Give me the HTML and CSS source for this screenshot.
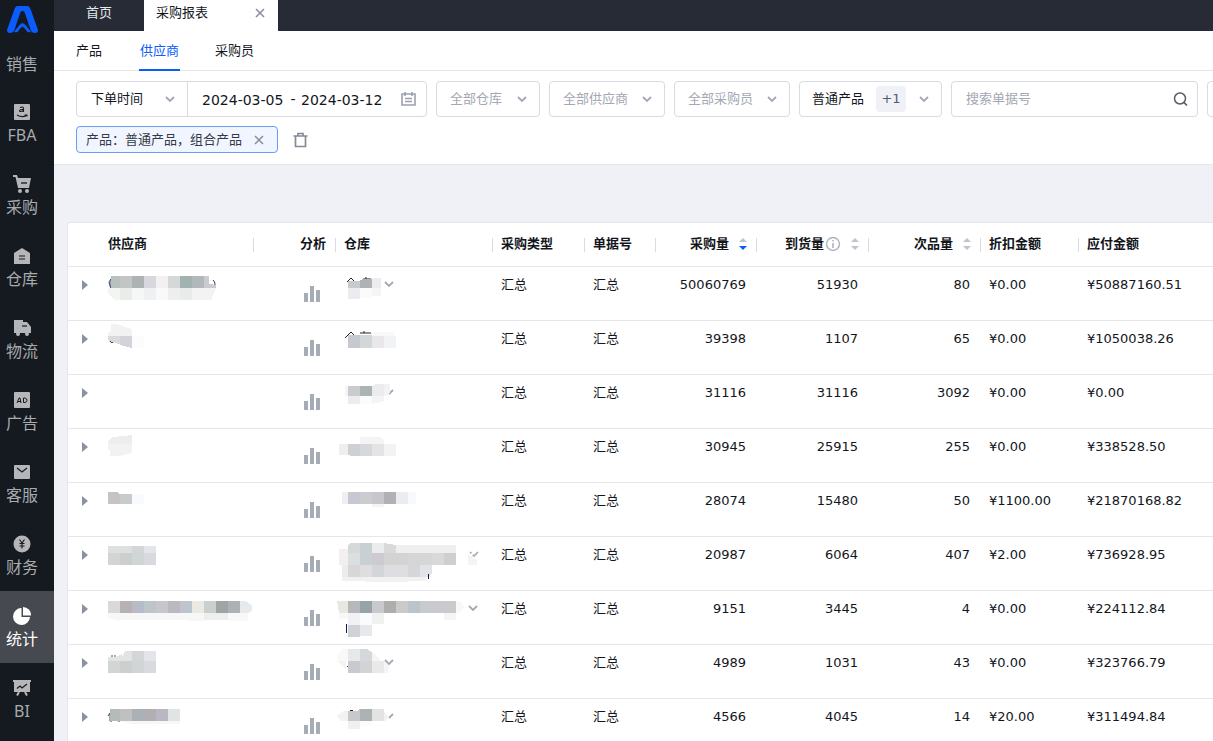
FILE: index.html
```html
<!DOCTYPE html>
<html lang="zh-CN">
<head>
<meta charset="utf-8">
<title>采购报表</title>
<link rel="stylesheet" href="styles.css">
</head>
<body>
<svg class="sprite" aria-hidden="true">
  <symbol id="chev" viewBox="0 0 10 7"><path d="M1 1l4 4 4-4" fill="none" stroke="#a3a9b5" stroke-width="1.8"/></symbol>
  <symbol id="cross" viewBox="0 0 10 10"><path d="M1 1l8 8M9 1l-8 8" fill="none" stroke="currentColor" stroke-width="1.6"/></symbol>
  <symbol id="bars" viewBox="0 0 16 16"><path d="M0 7h4v9H0zM6 0h4v16H6zM12 4h4v12h-4z" fill="#a6acb6"/></symbol>
  <symbol id="tri" viewBox="0 0 6 10"><path d="M0 0l6 5-6 5z" fill="#8b929f"/></symbol>
</svg>
<div class="app">
  <nav class="side">
    <a class="logo" href="#" aria-label="主页"><svg width="31" height="27" viewBox="0 0 31 27"><path d="M10.500 0h10q2 0 3 3l7.500 21q0 3-3 3-3 0-4-2L17.500 6q-2-2-4 0L7 25q-1 2-4 2-3 0-3-3L7.500 3q1-3 3-3z" fill="#0a5cff"/><path d="M6 26.500L13 18q2.500-2.500 5 0l7 8.500h-4.500L17 22q-1.500-1.500-3 0l-3.500 4.500z" fill="#0a5cff" stroke="#141a20" stroke-width=".7"/></svg></a>
    <a class="item first" href="#">销售</a>
    <a class="item" href="#"><svg width="18" height="18" viewBox="0 0 18 18"><rect x="1" y="1" width="16" height="16" rx="1" fill="#b4b6b9"/><path d="M7 4.500q3.500-1.500 3.500 1v3.500M10.500 6.500q-4-.3-4 1.300t4-.3M4 12q5 3 9.500.500M11.500 12h2.500v1.500" fill="none" stroke="#141a20" stroke-width="1.1"/></svg>FBA</a>
    <a class="item" href="#"><svg width="18" height="18" viewBox="0 0 18 18"><path d="M0 0h4l1 3h13l-2 10H5L2.500 2H0z" fill="#b4b6b9"/><circle cx="7" cy="16" r="2" fill="#b4b6b9"/><circle cx="14" cy="16" r="2" fill="#b4b6b9"/><path d="M8 8h6" stroke="#141a20" stroke-width="1.300"/></svg>采购</a>
    <a class="item" href="#"><svg width="18" height="18" viewBox="0 0 18 18"><path d="M1 6l8-5 8 5v11H1z" fill="#b4b6b9"/><path d="M6 9h6M6 12h6" stroke="#141a20" stroke-width="1.200"/></svg>仓库</a>
    <a class="item" href="#"><svg width="18" height="18" viewBox="0 0 18 18"><path d="M1 1h9v2h4l4 5v6H1z" fill="#b4b6b9"/><circle cx="5" cy="15" r="2" fill="#b4b6b9"/><circle cx="14" cy="15" r="2" fill="#b4b6b9"/><path d="M9 7h5" stroke="#141a20" stroke-width="1.200"/></svg>物流</a>
    <a class="item" href="#"><svg width="18" height="18" viewBox="0 0 18 18"><rect x="1" y="1" width="16" height="16" rx="1" fill="#b4b6b9"/><path d="M4 12l2-5h1l1 5M5 10.500h3M10.500 7v4.500h1.500q2-.5 2-2.200T12 7z" fill="none" stroke="#141a20" stroke-width="1"/></svg>广告</a>
    <a class="item" href="#"><svg width="18" height="18" viewBox="0 0 18 18"><rect x="1" y="2" width="16" height="14" rx="1" fill="#b4b6b9"/><path d="M4 5l5 4 5-4" fill="none" stroke="#141a20" stroke-width="1.200"/></svg>客服</a>
    <a class="item" href="#"><svg width="18" height="18" viewBox="0 0 18 18"><circle cx="9" cy="9" r="8.500" fill="#b4b6b9"/><path d="M6.500 4.500L9 8l2.500-3.500M9 8v5.500M6.500 8.500h5M6.500 11h5" fill="none" stroke="#141a20" stroke-width="1.100"/></svg>财务</a>
    <a class="item active" href="#"><svg width="18" height="18" viewBox="0 0 18 18"><path d="M8.500 1v9H17A8.500 8.500 0 1 1 8.500 1z" fill="#fff"/><path d="M10 0a8 8 0 0 1 8 8.500h-8z" fill="#fff"/></svg>统计</a>
    <a class="item" href="#"><svg width="18" height="18" viewBox="0 0 18 18"><path d="M0 1h18v2h-1v10H1V3H0z" fill="#b4b6b9"/><path d="M6 13l-2 3.500M12 13l2 3.500" stroke="#b4b6b9" stroke-width="2"/><path d="M4 9.500l3-2.500 2 2 5-4" fill="none" stroke="#141a20" stroke-width="1.200"/></svg>BI</a>
  </nav>
  <main class="main">
    <div class="tabs">
      <a class="tab" href="#">首页</a>
      <div class="tab current"><span>采购报表</span><button class="plain" aria-label="关闭"><svg width="10" height="10"><use href="#cross"/></svg></button></div>
    </div>
    <nav class="subtabs"><a href="#">产品</a><a class="on" href="#">供应商</a><a href="#">采购员</a></nav>
    <section class="filters">
      <div class="row">
        <div class="box group">
          <label class="pick w-time"><select aria-label="时间类型"><option>下单时间</option></select><svg width="10" height="7"><use href="#chev"/></svg></label>
          <div class="dates">
            <input aria-label="开始日期" value="2024-03-05"><span class="dash">-</span><input aria-label="结束日期" value="2024-03-12">
            <svg width="15" height="14" viewBox="0 0 15 14"><path d="M1 2h13v11H1zM4 0v4M11 0v4M4 6.500h7M4 9.500h7" fill="none" stroke="#9aa1ad" stroke-width="1.600"/></svg>
          </div>
        </div>
        <label class="box pick muted w-house"><select aria-label="仓库"><option>全部仓库</option></select><svg width="10" height="7"><use href="#chev"/></svg></label>
        <label class="box pick muted w-sup"><select aria-label="供应商"><option>全部供应商</option></select><svg width="10" height="7"><use href="#chev"/></svg></label>
        <label class="box pick muted w-sup"><select aria-label="采购员"><option>全部采购员</option></select><svg width="10" height="7"><use href="#chev"/></svg></label>
        <button class="box multi"><span>普通产品</span><span class="more">+1</span><svg width="10" height="7"><use href="#chev"/></svg></button>
        <div class="box search"><input placeholder="搜索单据号" aria-label="搜索单据号"><button class="plain" aria-label="搜索"><svg width="15" height="15" viewBox="0 0 15 15"><circle cx="7" cy="6.500" r="5.500" fill="none" stroke="#565c68" stroke-width="1.500"/><path d="M10.500 10l3.500 3.500" stroke="#565c68" stroke-width="1.700"/></svg></button></div>
        <button class="box tail" aria-label="更多筛选"></button>
      </div>
      <div class="row chosen">
        <div class="chip"><span>产品：普通产品，组合产品</span><button class="plain" aria-label="移除"><svg width="10" height="10"><use href="#cross"/></svg></button></div>
        <button class="plain" aria-label="清空"><svg width="15" height="16" viewBox="0 0 15 16"><path d="M0.500 4h14M5 4V1.500h5V4M2.500 4v10.500h10V4" fill="none" stroke="#858b96" stroke-width="1.700"/></svg></button>
      </div>
    </section>
    <section class="content">
      <table class="grid">
        <colgroup><col class="c-exp"><col class="c-sup"><col class="c-ana"><col class="c-house"><col class="c-type"><col class="c-doc"><col class="c-qty"><col class="c-num"><col class="c-num"><col class="c-disc"><col></colgroup>
        <thead><tr>
          <th class="nosep"></th><th class="sup">供应商</th><th class="num">分析</th><th>仓库</th><th>采购类型</th><th>单据号</th>
          <th class="num">采购量<svg class="sort" width="8" height="12" viewBox="0 0 8 12"><path d="M0 4l4-4 4 4z" fill="#c0c4cc"/><path d="M0 8l4 4 4-4z" fill="#0a5cff"/></svg></th>
          <th class="num">到货量<svg class="info" width="16" height="16" viewBox="0 0 16 16"><circle cx="8" cy="8" r="6.500" fill="none" stroke="#adb3be" stroke-width="1.400"/><path d="M8 4v1.600M8 7v5" stroke="#adb3be" stroke-width="1.600"/></svg><svg class="sort" width="8" height="12" viewBox="0 0 8 12"><path d="M0 4l4-4 4 4zM0 8l4 4 4-4z" fill="#c0c4cc"/></svg></th>
          <th class="num">次品量<svg class="sort" width="8" height="12" viewBox="0 0 8 12"><path d="M0 4l4-4 4 4zM0 8l4 4 4-4z" fill="#c0c4cc"/></svg></th>
          <th>折扣金额</th><th class="nosep">应付金额</th>
        </tr></thead>
        <tbody>
        <tr><td class="exp"><button class="plain" aria-label="展开"><svg width="6" height="10"><use href="#tri"/></svg></button></td>
          <td class="pix"><svg width="156" height="52"><path d="M11 15l2-3v9l-1-2zM115 13q4 4 0 8" fill="none" stroke="#33415c"/><path fill="#babfbf" d="M13 9h9v12h-9z"/><path fill="#c2c5c4" d="M22 9h12v12H22z"/><path fill="#adb3b5" d="M34 9h12v12H34z"/><path fill="#d6d8de" d="M46 9h12v12H46z"/><path fill="#f2f0f0" d="M58 9h12v12H58z"/><path fill="#d4d8d8" d="M70 9h12v12H70z"/><path fill="#a1b2b1" d="M82 9h12v12H82z"/><path fill="#b0b8bb" d="M94 9h12v12H94z"/><path fill="#c9cbd0" d="M106 9h5v8l7 1v3h-12z"/><path fill="#f3f5f3" d="M10 21h12v12h-6l-6-6z"/><path fill="#eaecea" d="M22 21h12v12H22z"/><path fill="#f5f6f6" d="M34 21h12v12H34z"/><path fill="#eef0f3" d="M46 21h12v12H46z"/><path fill="#f9f9f9" d="M58 21h12v12H58z"/><path fill="#eee" d="M70 21h12v12H70z"/><path fill="#e9eaea" d="M82 21h12v12H82z"/><path fill="#f3f3f3" d="M94 21h12v12H94z"/><path fill="#f3f3f6" d="M106 21h12l-5 12h-7z"/></svg></td>
          <td class="ana"><button class="plain" aria-label="分析"><svg width="16" height="16"><use href="#bars"/></svg></button></td>
          <td class="pix"><svg width="156" height="52"><path d="M11 15l4-4 3 3M27 12h8M30 10v2" fill="none" stroke="#222"/><path fill="#c8cacd" d="M12 14h12v7H12z"/><path fill="#acb2b5" d="M24 13l3-1h9v9H24z"/><path fill="#edebed" d="M36 11h9v10h-9z"/><path fill="#eaecef" d="M12 21h12v11H12z"/><path fill="#fbfbfb" d="M24 21h12v10H24z"/><path fill="#f5f5f5" d="M36 21h9v8h-9z"/><use href="#chev" x="48" y="14" width="10" height="7"/></svg></td>
          <td>汇总</td><td>汇总</td><td class="num">50060769</td><td class="num">51930</td><td class="num">80</td><td>¥0.00</td><td>¥50887160.51</td></tr>
        <tr><td class="exp"><button class="plain" aria-label="展开"><svg width="6" height="10"><use href="#tri"/></svg></button></td>
          <td class="pix"><svg width="156" height="52"><path d="M11 19q2 4 5 2" fill="none" stroke="#222"/><path fill="#f2f2f2" d="M10 11l3-1V3h5l16 5v7H10z"/><path fill="#d9dadb" d="M10 15h12v8l-6-1-6-3z"/><path fill="#d3d3d9" d="M22 15h12v12l-12-3z"/><path fill="#fcfcfd" d="M34 15h12v12H34z"/></svg></td>
          <td class="ana"><button class="plain" aria-label="分析"><svg width="16" height="16"><use href="#bars"/></svg></button></td>
          <td class="pix"><svg width="156" height="52"><path d="M9 17l6-6 5 5M24 12h11M28 10v2" fill="none" stroke="#222"/><path fill="#f8f8f8" d="M32 14l6-3h20v5H32z"/><path fill="#c6c9ce" d="M12 14h12v13H12z"/><path fill="#d3d7d7" d="M24 14h12v13H24z"/><path fill="#e9e7e9" d="M36 15h12v12H36z"/><path fill="#f1f3f5" d="M48 15h12v10l-2 2H48z"/></svg></td>
          <td>汇总</td><td>汇总</td><td class="num">39398</td><td class="num">1107</td><td class="num">65</td><td>¥0.00</td><td>¥1050038.26</td></tr>
        <tr><td class="exp"><button class="plain" aria-label="展开"><svg width="6" height="10"><use href="#tri"/></svg></button></td>
          <td class="pix"></td>
          <td class="ana"><button class="plain" aria-label="分析"><svg width="16" height="16"><use href="#bars"/></svg></button></td>
          <td class="pix"><svg width="156" height="52"><path d="M53 19l4-4" stroke="#a3a9b5" stroke-width="1.800"/><path fill="#f5f5f5" d="M9 11h3v10H9z"/><path fill="#c9cbce" d="M12 11h12v10H12z"/><path fill="#acb3b5" d="M24 11h12v10H24z"/><path fill="#ecebed" d="M36 11l4-2h8v12H36z"/><path fill="#f1f2f4" d="M48 9h6v8l-3 4h-3z"/><path fill="#eaecef" d="M12 21h12v8H12z"/><path fill="#fbfbf9" d="M24 21h12v8H24z"/><path fill="#f4f4f4" d="M36 21h12v5l-12 3z"/></svg></td>
          <td>汇总</td><td>汇总</td><td class="num">31116</td><td class="num">31116</td><td class="num">3092</td><td>¥0.00</td><td>¥0.00</td></tr>
        <tr><td class="exp"><button class="plain" aria-label="展开"><svg width="6" height="10"><use href="#tri"/></svg></button></td>
          <td class="pix"><svg width="156" height="52"><path fill="#ededee" d="M10 12l4-4 12-1 8-1v9H10z"/><path fill="#f2f2f2" d="M10 15h24v9l-12 3H12v-6h-2z"/></svg></td>
          <td class="ana"><button class="plain" aria-label="分析"><svg width="16" height="16"><use href="#bars"/></svg></button></td>
          <td class="pix"><svg width="156" height="52"><path fill="#f4f4f5" d="M24 8h20l4 3v4H24z"/><path fill="#f0eeed" d="M3 15h9v11H3z"/><path fill="#cfd0d5" d="M12 15h12v12h-9l-3-1z"/><path fill="#d5d9d9" d="M24 15h12v12H24z"/><path fill="#e4e4e6" d="M36 15h12v12H36z"/><path fill="#f2f3f5" d="M48 15h12v12H48z"/></svg></td>
          <td>汇总</td><td>汇总</td><td class="num">30945</td><td class="num">25915</td><td class="num">255</td><td>¥0.00</td><td>¥338528.50</td></tr>
        <tr><td class="exp"><button class="plain" aria-label="展开"><svg width="6" height="10"><use href="#tri"/></svg></button></td>
          <td class="pix"><svg width="156" height="52"><path fill="#c7c2c4" d="M10 9h9l3 2v10H10z"/><path fill="#c9cbc9" d="M22 11h12v10H22z"/><path fill="#f8fafd" d="M34 11h12v10H34z"/></svg></td>
          <td class="ana"><button class="plain" aria-label="分析"><svg width="16" height="16"><use href="#bars"/></svg></button></td>
          <td class="pix"><svg width="156" height="52"><path fill="#f0efef" d="M6 9h6v12H6z"/><path fill="#c6c9d2" d="M12 9h12v12H12z"/><path fill="#cccccf" d="M24 9h12v12H24z"/><path fill="#c6c7cc" d="M36 9h12v12H36z"/><path fill="#b2afb5" d="M48 9h12v12H48z"/><path fill="#ebecf0" d="M60 9h12v12H60z"/><path fill="#f7f9fc" d="M72 9h8v12h-8z"/><path fill="#f5f5f5" d="M36 21h12v3H36z"/></svg></td>
          <td>汇总</td><td>汇总</td><td class="num">28074</td><td class="num">15480</td><td class="num">50</td><td>¥1100.00</td><td>¥21870168.82</td></tr>
        <tr><td class="exp"><button class="plain" aria-label="展开"><svg width="6" height="10"><use href="#tri"/></svg></button></td>
          <td class="pix"><svg width="156" height="52"><path fill="#dde0df" d="M10 9h24v7H10z"/><path fill="#d4d5d8" d="M34 9h12v7H34z"/><path fill="#e4e5ea" d="M46 9h12v7H46z"/><path fill="#d1d5d4" d="M10 16h12v12H10z"/><path fill="#cdcecf" d="M22 16h12v12H22z"/><path fill="#d0d6d6" d="M34 16h12v12H34z"/><path fill="#d9dadf" d="M46 16h12v12H46z"/></svg></td>
          <td class="ana"><button class="plain" aria-label="分析"><svg width="16" height="16"><use href="#bars"/></svg></button></td>
          <td class="pix"><svg width="156" height="52"><path fill="#f3efee" d="M3 12h9v16H3z"/><path fill="#d7d8d8" d="M12 8l3-2h9v10H12z"/><path fill="#c9d0d4" d="M24 6h12v22H24z"/><path fill="#ebecec" d="M36 6h12v10H36z"/><path fill="#d9d9d8" d="M48 6l12 2v8H48z"/><path fill="#efefef" d="M60 8h60v8H60z"/><path fill="#dadfe2" d="M12 16h12v12H12z"/><path fill="#cdcbd1" d="M36 16h12v12H36z"/><path fill="#d3d3d4" d="M48 16h24v12H48z"/><path fill="#d6d6d8" d="M72 16h24v12H72z"/><path fill="#d8dad7" d="M96 16h12v12H96z"/><path fill="#cfced3" d="M108 16h12v12h-12z"/><path fill="#ececef" d="M6 28h6v12H6z"/><path fill="#d9d6d8" d="M12 28h12v12H12z"/><path fill="#dedee1" d="M24 28h12v12H24z"/><path fill="#d3d5d9" d="M36 28h12v12H36z"/><path fill="#dedee2" d="M48 28h24v12H48z"/><path fill="#d6d6d9" d="M72 28h12v12H72z"/><path fill="#e2e3e6" d="M84 28h12v8l-3 4h-9z"/><path fill="#f1f1f1" d="M6 40h84v4l-36 1-48-1z"/><path fill="#121262" d="M92 37h1v5h-1z"/><path fill="#f4f4f4" d="M132 17l9 6v5h-9z"/><path d="M134 15l4 4 4-4" fill="none" stroke="#a3a9b5" stroke-width="1.600" stroke-dasharray="2 2 9"/></svg></td>
          <td>汇总</td><td>汇总</td><td class="num">20987</td><td class="num">6064</td><td class="num">407</td><td>¥2.00</td><td>¥736928.95</td></tr>
        <tr><td class="exp"><button class="plain" aria-label="展开"><svg width="6" height="10"><use href="#tri"/></svg></button></td>
          <td class="pix"><svg width="156" height="52"><path fill="#d9d9dc" d="M10 10h12v12H10z"/><path fill="#b8b1b3" d="M22 10h12v12H22z"/><path fill="#b7bbc7" d="M34 10h12v12H34z"/><path fill="#bbc5ca" d="M46 10h12v12H46z"/><path fill="#c6c6cc" d="M58 10h12v12H58z"/><path fill="#bdb8bd" d="M70 10h12v12H70z"/><path fill="#bcc4cd" d="M82 10h12v12H82z"/><path fill="#ece9e4" d="M94 10h12v12H94z"/><path fill="#cacfd1" d="M106 10h12v12h-12z"/><path fill="#9fa5a2" d="M118 10h12v12h-12z"/><path fill="#adb1b5" d="M130 10h12v12h-12z"/><path fill="#e6eaed" d="M142 10h5l7 4v6l-4 2h-8z"/><path fill="#f7f7f7" d="M10 22h96v8l-30-1H22l-12-1z"/><path fill="#eee" d="M106 22h24v7h-24z"/><path fill="#f8f8f8" d="M130 22h20v8h-20z"/></svg></td>
          <td class="ana"><button class="plain" aria-label="分析"><svg width="16" height="16"><use href="#bars"/></svg></button></td>
          <td class="pix"><svg width="156" height="52"><path fill="#eae6e2" d="M1 10h11v12H3z"/><path fill="#b5b9bc" d="M12 10h12v12H12z"/><path fill="#98a3a9" d="M24 10h12v12H24z"/><path fill="#c8c9ca" d="M36 10h12v12H36z"/><path fill="#aeafab" d="M48 10h12v12H48z"/><path fill="#c9cacc" d="M60 10h12v12H60z"/><path fill="#bbc3cb" d="M72 10h12v12H72z"/><path fill="#c9cacd" d="M84 10h36v12H84z"/><path fill="#f7f9f9" d="M120 10h4l4 6-4 6h-4z"/><path fill="#f9f8f7" d="M3 22h9v6H3z"/><path fill="#f0f2f3" d="M12 22h12v12H12z"/><path fill="#fafbfd" d="M24 22h12v12H24z"/><path fill="#f0f2f2" d="M36 22h12v11H36z"/><path fill="#f4f6f6" d="M108 22h12v7h-12z"/><path fill="#cfd3d5" d="M12 34h12v12H12z"/><path fill="#e7e8ec" d="M24 34h12v11H24z"/><path fill="#121262" d="M10 33h1v9h-1z"/><use href="#chev" x="132" y="14" width="10" height="7"/></svg></td>
          <td>汇总</td><td>汇总</td><td class="num">9151</td><td class="num">3445</td><td class="num">4</td><td>¥0.00</td><td>¥224112.84</td></tr>
        <tr><td class="exp"><button class="plain" aria-label="展开"><svg width="6" height="10"><use href="#tri"/></svg></button></td>
          <td class="pix"><svg width="156" height="52"><path d="M13 11h2M16 11h2" stroke="#457"/><path fill="#e2e4e2" d="M10 12h8l6-3v3l3-6h7v10H10z"/><path fill="#d4d5d8" d="M34 6h12v10H34z"/><path fill="#e4e5ea" d="M46 6h12v10H46z"/><path fill="#d1d5d4" d="M10 16h12v12H10z"/><path fill="#cdcecf" d="M22 16h12v12H22z"/><path fill="#d0d6d6" d="M34 16h12v12H34z"/><path fill="#d9dadf" d="M46 16h12v12H46z"/></svg></td>
          <td class="ana"><button class="plain" aria-label="分析"><svg width="16" height="16"><use href="#bars"/></svg></button></td>
          <td class="pix"><svg width="156" height="52"><path fill="#f9f9f9" d="M1 9l5-5h6v12H1z"/><path fill="#f7f2f2" d="M1 16h9v9z"/><path fill="#e7e8e8" d="M12 4h12v12H12z"/><path fill="#d5d8da" d="M24 4h7l5 3v9H24z"/><path fill="#f5f5f5" d="M36 7l8 7v2h-8z"/><path fill="#c9cacf" d="M12 16h12v12H12z"/><path fill="#d3d3d5" d="M24 16h12v12H24z"/><path fill="#eae9ea" d="M36 16h12v12H36z"/><path fill="#f5f5f5" d="M48 16l5 5-1 7h-4z"/><path fill="#445" d="M11 21h1v1h-1z"/><use href="#chev" x="48" y="14" width="10" height="7"/></svg></td>
          <td>汇总</td><td>汇总</td><td class="num">4989</td><td class="num">1031</td><td class="num">43</td><td>¥0.00</td><td>¥323766.79</td></tr>
        <tr><td class="exp"><button class="plain" aria-label="展开"><svg width="6" height="10"><use href="#tri"/></svg></button></td>
          <td class="pix"><svg width="156" height="52"><path d="M10 17l2-3v8h2M20 22h2" fill="none" stroke="#345"/><path fill="#b4bbb9" d="M12 10h10v12H12z"/><path fill="#bfc1c0" d="M22 10h12v12H22z"/><path fill="#abb2b5" d="M34 10h12v12H34z"/><path fill="#b1afb1" d="M46 10h12v12H46z"/><path fill="#b9b7c3" d="M58 10h12v12H58z"/><path fill="#e1e4e4" d="M70 10h12v12H70z"/><path fill="#f6f7f7" d="M22 22h60v3H34z"/></svg></td>
          <td class="ana"><button class="plain" aria-label="分析"><svg width="16" height="16"><use href="#bars"/></svg></button></td>
          <td class="pix"><svg width="156" height="52"><path d="M53 19l4-4" stroke="#a3a9b5" stroke-width="1.800"/><path fill="#f4f1f1" d="M0 17l8-5h4v10H6z"/><path fill="#c6c8ca" d="M12 12h9l3-2v12H12z"/><path fill="#adb2b5" d="M24 10h12v12H24z"/><path fill="#e3e3e4" d="M36 10h12v12H36z"/><path fill="#f2f2f3" d="M48 12l5 6-3 4h-2z"/><path fill="#f0f0f2" d="M12 22h12v8H12z"/><path fill="#fbfbfb" d="M24 22h12v5H24z"/><path fill="#223" d="M14 11h3v1h-3z"/></svg></td>
          <td>汇总</td><td>汇总</td><td class="num">4566</td><td class="num">4045</td><td class="num">14</td><td>¥20.00</td><td>¥311494.84</td></tr>
        </tbody>
      </table>
    </section>
  </main>
</div>
</body>
</html>
```
FILE: styles.css
```css
* { box-sizing: border-box; }
body {
  margin: 0;
  height: 100vh;
  overflow: hidden;
  background: #f0f1f6;
  color: #13161c;
  font: 13px/20px "DejaVu Sans", "Noto Sans CJK SC", sans-serif;
}
a { color: inherit; text-decoration: none; }
button, input, select { font: inherit; color: inherit; margin: 0; }
svg { flex: none; display: block; }
.sprite { width: 0; height: 0; position: absolute; }
.plain { display: flex; padding: 0; border: 0; background: none; color: #8b919c; }

.app { display: flex; height: 100vh; }
.main { flex: 1; min-width: 0; overflow: hidden; }

.side {
  flex: none;
  width: 54px;
  overflow: hidden;
  background: #141a20;
  color: #a9abae;
  font: 16px/20px "Noto Sans", "Noto Sans CJK SC", sans-serif;
}
.logo { display: flex; justify-content: center; height: 40px; padding: 6px 9px 0 0; }
.item {
  display: flex;
  flex-direction: column;
  align-items: center;
  gap: 4px;
  height: 72px;
  padding: 16px 10px 0 0;
  white-space: nowrap;
}
.first { height: 47px; padding-top: 14px; }
.active { background: #46494f; color: #fff; }

.tabs { display: flex; height: 31px; background: #262b36; color: #e6e8eb; }
.tab { display: flex; width: 90px; justify-content: center; padding-top: 3px; }
.current {
  width: 134px;
  justify-content: space-between;
  padding: 3px 13px 0 12px;
  background: #fff;
  color: #13161c;
}
.current .plain { padding-top: 5px; height: 20px; }

.subtabs {
  display: flex;
  gap: 35px;
  height: 40px;
  padding: 0 22px;
  background: #fff;
  border-bottom: 1px solid #e4e6ea;
}
.subtabs a { min-width: 28px; height: 40px; padding-top: 10px; }
.subtabs .on { padding: 10px 1px 0; color: #0a5cff; border-bottom: 2px solid #0a5cff; }

.filters { padding: 10px 6px 11px 22px; background: #fff; border-bottom: 1px solid #e4e6ea; }
.row { display: flex; gap: 9px; }
.box {
  display: flex;
  flex: none;
  align-items: center;
  height: 36px;
  border: 1px solid #d9dbe1;
  border-radius: 4px;
  background: #fff;
}
.pick { display: flex; flex: none; align-items: center; padding: 0 12px 0 13px; }
.pick select {
  appearance: none;
  flex: 1;
  min-width: 0;
  padding: 0;
  border: 0;
  outline: 0;
  background: none;
}
.muted { color: #a3a8b2; }
.w-time { width: 111px; height: 34px; padding-left: 14px; border-right: 1px solid #d9dbe1; }
.w-house { width: 104px; }
.w-sup { width: 116px; }
.group { width: 351px; }
.dates { display: flex; flex: 1; align-items: center; padding: 0 10px 0 14px; font-size: 14px; }
.dates input { width: 83px; padding: 2px 0 0; border: 0; outline: 0; background: none; }
.dates .dash { width: 16px; text-align: center; }
.dates svg { margin-left: auto; }
.multi { width: 143px; padding: 0 12px; }
.multi svg { margin-left: auto; }
.more {
  width: 30px;
  height: 26px;
  margin-left: 12px;
  border-radius: 4px;
  background: #f0f1f6;
  color: #565c68;
  line-height: 26px;
}
.search { flex: 1; min-width: 120px; padding: 0 9px 0 14px; }
.search input { flex: 1; min-width: 0; padding: 0; border: 0; outline: 0; }
.search input::placeholder { color: #a3a8b2; opacity: 1; }
.tail { width: 36px; margin-right: -36px; }
.chosen { align-items: center; gap: 15px; margin-top: 9px; }
.chip {
  display: flex;
  align-items: center;
  gap: 12px;
  height: 27px;
  padding: 0 13px 0 9px;
  border: 1px solid #6b9cf5;
  border-radius: 4px;
  background: #f0f5ff;
  color: #343a45;
}

.content { padding: 57px 0 0 13px; }
.grid {
  width: 100%;
  table-layout: fixed;
  border-spacing: 0;
  border: solid #e4e6ea;
  border-width: 1px 0 0 1px;
  border-radius: 4px 0 0 0;
  background: #fff;
}
.c-exp { width: 30px; }
.c-sup { width: 156px; }
.c-ana { width: 82px; }
.c-house { width: 157px; }
.c-type { width: 92px; }
.c-doc { width: 71px; }
.c-qty { width: 101px; }
.c-num { width: 112px; }
.c-disc { width: 98px; }
th, td {
  height: 54px;
  padding: 8px 11px 0 8px;
  border-bottom: 1px solid #e4e6ea;
  text-align: left;
  vertical-align: top;
  white-space: nowrap;
}
th {
  height: 44px;
  padding: 11px 10px 0 8px;
  font-weight: 700;
  background: linear-gradient(#d9dbe1, #d9dbe1) right 15px / 1px 14px no-repeat;
}
th.nosep { background: none; }
th.sup { padding-left: 10px; }
.num { text-align: right; }
th svg { display: inline-block; vertical-align: -2px; }
.sort { margin-left: 10px; }
th .info { margin-left: 1px; vertical-align: -4px; }
td.exp { padding: 13px 0 0 14px; }
td.pix { padding: 0; }
td.pix svg { shape-rendering: crispEdges; }
td.pix use, td.pix path[stroke] { shape-rendering: auto; }
td.ana { padding: 19px 16px 0 0; }
td.ana .plain { margin-left: auto; }
```
